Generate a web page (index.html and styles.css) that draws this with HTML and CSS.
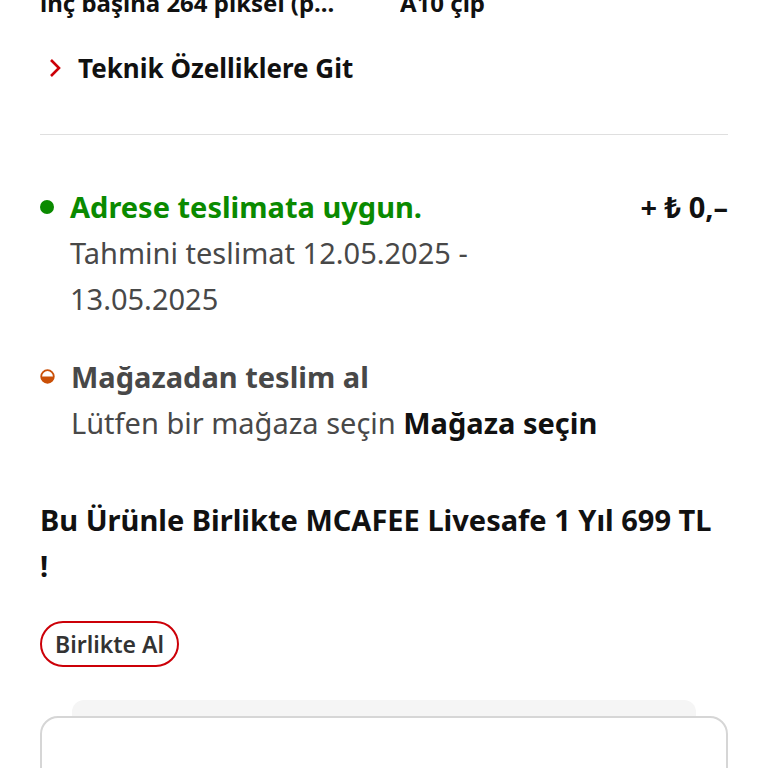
FILE: index.html
```html
<!DOCTYPE html>
<html lang="tr">
<head>
<meta charset="utf-8">
<link rel="stylesheet" href="styles.css">
</head>
<body>
<main class="page">
  <div class="specs">
    <span class="spec">inç başına 264 piksel (p...</span>
    <span class="spec">A10 çip</span>
  </div>
  <a class="spec-link" href="#">
    <svg class="chev" width="14" height="20" viewBox="0 0 14 20"><path d="M3 2 L11 10 L3 18" fill="none" stroke="#cc0008" stroke-width="2.6"/></svg>
    <span>Teknik Özelliklere Git</span>
  </a>
  <hr class="divider">
  <section class="option">
    <span class="dot dot-green"></span>
    <div class="option-body">
      <div class="option-head">
        <span class="title-green">Adrese teslimata uygun.</span>
        <span class="price">+ ₺ 0,–</span>
      </div>
      <p class="muted">Tahmini teslimat 12.05.2025 -<br>13.05.2025</p>
    </div>
  </section>
  <section class="option option-store">
    <svg class="half" width="15" height="15" viewBox="0 0 15 15"><circle cx="7.5" cy="7.5" r="6.3" fill="#fff" stroke="#ca5008" stroke-width="1.8"/><path d="M1.2 7.5 A6.3 6.3 0 0 0 13.8 7.5 Z" fill="#ca5008"/></svg>
    <div class="option-body">
      <div class="title-gray">Mağazadan teslim al</div>
      <p class="muted">Lütfen bir mağaza seçin <strong class="strong">Mağaza seçin</strong></p>
    </div>
  </section>
  <h2 class="offer">Bu Ürünle Birlikte MCAFEE Livesafe 1 Yıl 699 TL<br>!</h2>
  <button class="pill">Birlikte Al</button>
  <div class="stack">
    <div class="stack-back"></div>
    <div class="stack-card"></div>
  </div>
</main>
</body>
</html>
```
FILE: styles.css
```css
html, body { margin: 0; padding: 0; background: #fff; }
body { font-family: "Noto Sans", "Open Sans", sans-serif; color: #111; overflow: hidden; height: 768px; }
.page { padding: 0 40px; }
.specs { display: grid; grid-template-columns: 360px 1fr; margin-top: -20px; font-size: 24px; font-weight: 700; line-height: 46px; }
.spec { white-space: nowrap; overflow: hidden; }
.spec-link { display: flex; align-items: center; gap: 16px; height: 46px; margin-top: 19px; font-size: 26px; font-weight: 700; color: #111; text-decoration: none; }
.chev { margin-left: 8px; }
.divider { border: 0; border-top: 1px solid #dfdfdf; margin: 43px 0 0; }
.option { display: flex; align-items: flex-start; gap: 16px; margin-top: 49px; }
.dot { width: 14px; height: 14px; border-radius: 50%; margin-top: 16px; flex: none; }
.dot-green { background: #0a8a00; }
.half { margin-top: 15px; flex: none; }
.option-body { flex: 1; font-size: 29px; line-height: 46px; }
.option-head { display: flex; justify-content: space-between; }
.title-green { color: #0a8a00; font-weight: 700; }
.price { font-weight: 700; color: #111; }
.title-gray { color: #484848; font-weight: 700; }
.muted { margin: 0; color: #484848; }
.strong { color: #111; font-weight: 700; }
.option-store { margin-top: 32px; }
.offer { margin: 51px 0 0; font-size: 29px; line-height: 46px; font-weight: 700; }
.pill { display: block; margin-top: 32px; height: 46px; padding: 0 13px; border: 2px solid #cc0008; border-radius: 23px; background: #fff; font-family: inherit; font-size: 23px; font-weight: 600; color: #333; }
.stack { margin-top: 33px; }
.stack-back { height: 16px; margin: 0 32px; background: #f5f5f5; border-radius: 12px 12px 0 0; }
.stack-card { height: 120px; border: 2px solid #d6d6d6; border-radius: 18px; background: #fff; }
```
